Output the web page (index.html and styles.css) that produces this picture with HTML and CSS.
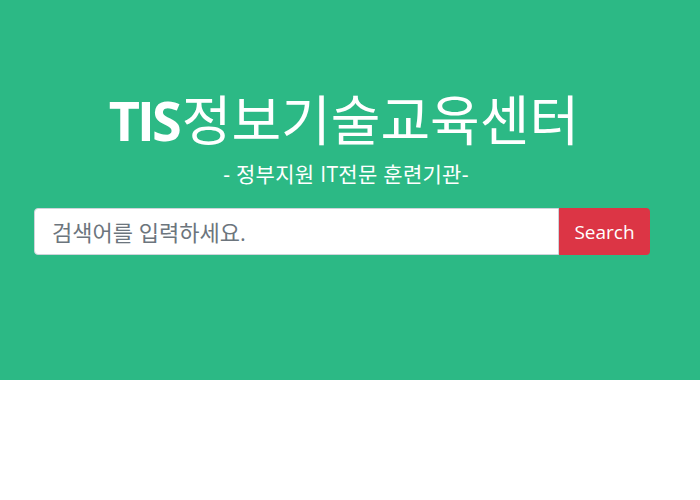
FILE: index.html
```html
<!DOCTYPE html>
<html lang="ko">
<head>
<meta charset="utf-8">
<title>TIS정보기술교육센터</title>
<link rel="stylesheet" href="styles.css">
</head>
<body>
<header class="hero">
  <h1 class="title"><b>TIS</b>정보기술교육센터</h1>
  <p class="subtitle">- 정부지원 IT전문 훈련기관-</p>
  <form class="search">
    <input class="search-input" type="text" placeholder="검색어를 입력하세요.">
    <button class="search-btn" type="button">Search</button>
  </form>
</header>
</body>
</html>
```

FILE: styles.css
```css
html, body {
  margin: 0;
  padding: 0;
  background: #fff;
}
body {
  font-family: "Open Sans", "Noto Sans CJK KR", sans-serif;
}
.hero {
  background: #2cb985;
  height: 380px;
  box-sizing: border-box;
  padding: 84px 50px 0 34px;
  color: #fff;
  display: flex;
  flex-direction: column;
  align-items: center;
}
.title {
  margin: 0;
  padding-left: 4px;
  font-size: 54px;
  font-weight: 400;
  line-height: 72px;
  text-align: center;
}
.title b {
  font-weight: 700;
  letter-spacing: -3px;
  margin-right: 3px;
}
.subtitle {
  margin: 3px 0 0;
  padding-left: 8px;
  font-size: 21px;
  line-height: 30px;
  text-align: center;
  letter-spacing: 0.3px;
}
.search {
  margin-top: 19px;
  display: flex;
  width: 616px;
}
.search-input {
  flex: 1;
  height: 47px;
  box-sizing: border-box;
  border: 1px solid #ced4da;
  border-radius: 4px 0 0 4px;
  padding: 0 17px;
  font-size: 22px;
  font-family: inherit;
  color: #495057;
  outline: none;
}
.search-input::placeholder {
  color: #6c757d;
}
.search-btn {
  width: 91px;
  height: 47px;
  border: none;
  border-radius: 0 4px 4px 0;
  background: #dc3545;
  color: #fff;
  font-size: 19px;
  font-family: inherit;
  padding: 0;
}
```
